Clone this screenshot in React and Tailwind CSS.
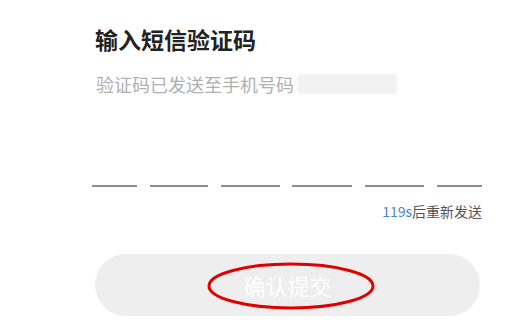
import React from 'react'

// Écran de saisie du code SMS : titre, rappel du numéro masqué,
// six cases soulignées, compte à rebours et bouton de validation inactif.
const CASES = [45, 58, 59, 60, 59, 45]

export default function App() {
  return (
    <div className="h-[328px] w-[509px] overflow-hidden bg-white font-['Noto_Sans_CJK_SC',sans-serif]">
      <div className="ml-[92px] w-[390px] pt-[26px]">
        <h1 className="pl-[3px] text-[23px] leading-[26px] font-bold text-[#222]">输入短信验证码</h1>

        <div className="mt-[21px] flex items-center pl-[4px] text-[18px] leading-[22px] text-[#b0b0b0]">
          <span>验证码已发送至手机号码</span>
          <span className="ml-[3px] h-[20px] w-[100px] bg-[#f2f2f2] blur-[1px]" />
        </div>

        <div className="mt-[90px] flex justify-between">
          {CASES.map((w, i) => (
            <span key={i} className="h-[2px] bg-[#8c8c8c]" style={{ width: w }} />
          ))}
        </div>

        <p className="mt-[15px] text-right text-[14px] leading-[18px] text-[#555]">
          <span className="text-[#4a84d4]">119s</span>后重新发送
        </p>

        <button className="relative mt-[34px] ml-[3px] flex h-[62px] w-[385px] items-center justify-center rounded-full bg-[#eeeeee] text-[22px] text-white">
          确认提交
          <svg
            className="absolute top-[8px] left-[112px]"
            width="168"
            height="48"
            viewBox="0 0 168 48"
          >
            <ellipse cx="84" cy="24" rx="82" ry="22" fill="none" stroke="#e00000" strokeWidth="3" />
          </svg>
        </button>
      </div>
    </div>
  )
}
